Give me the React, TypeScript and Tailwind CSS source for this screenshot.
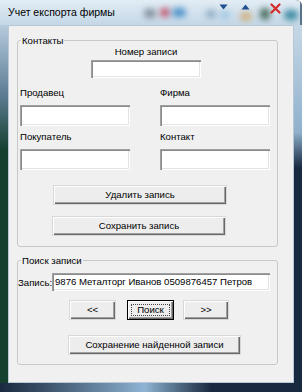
import React from 'react';

const FONT = { fontFamily: '"Liberation Sans", Arial, sans-serif' };

const SUNKEN =
  'bg-white shadow-[inset_1px_1px_0_#a0a0a0,inset_2px_2px_0_#8a8a8a,inset_-1px_-1px_0_#ffffff,inset_-2px_-2px_0_#e3e3e3]';
const RAISED =
  'bg-[#ededed] border border-[#d8d8d8] shadow-[inset_1px_1px_0_#ffffff,inset_-1px_-1px_0_#696969,inset_-2px_-2px_0_#a0a0a0]';

function TextBox({ className = '', value }: { className?: string; value?: string }) {
  return (
    <div className={`${SUNKEN} ${className} flex items-center pl-[3px] text-[9.6px] text-black whitespace-nowrap overflow-hidden`}>
      {value}
    </div>
  );
}

function Button({ className = '', children, focused }: { className?: string; children: React.ReactNode; focused?: boolean }) {
  if (focused) {
    return (
      <div className={`${className} h-[20px] flex bg-[#ededed] border border-black shadow-[inset_1px_1px_0_#ffffff,inset_-1px_-1px_0_#696969,inset_-2px_-2px_0_#a0a0a0]`}>
        <div className="flex-1 m-[3px] border border-dotted border-[#444] flex items-center justify-center text-[9.6px] text-black">
          {children}
        </div>
      </div>
    );
  }
  return (
    <div className={`${RAISED} ${className} h-[20px] flex items-center justify-center text-[9.6px] text-black`}>
      {children}
    </div>
  );
}

function TitleBar() {
  return (
    <div className="relative h-[25px] flex items-center pl-[8px] overflow-hidden bg-gradient-to-b from-[#e2ecf4] via-[#d3e2ee] to-[#c4d7e6]">
      {/* blurred desktop showing through the glass */}
      <div className="absolute left-[144px] top-[9px] w-[12px] h-[9px] rounded-full bg-[#7e8c98] blur-[3px]" />
      <div className="absolute left-[160px] top-[8px] w-[10px] h-[9px] rounded-full bg-[#c0506a] blur-[3px]" />
      <div className="absolute left-[172px] top-[8px] w-[14px] h-[9px] rounded-full bg-[#4a90c8] blur-[3px]" />
      <div className="absolute left-[206px] top-[10px] w-[10px] h-[8px] rounded-full bg-[#88a8c0] blur-[3px]" />
      <div className="absolute left-[220px] top-[11px] w-[10px] h-[8px] rounded-full bg-[#9ec6e4] blur-[3px]" />
      <div className="absolute left-[240px] top-[12px] w-[12px] h-[9px] rounded-full bg-[#d0b080] blur-[3px]" />
      <div className="absolute left-[260px] top-[8px] w-[10px] h-[12px] rounded-full bg-[#466a5a] blur-[3px]" />
      <div className="absolute left-[284px] top-[10px] w-[14px] h-[10px] rounded-full bg-[#3a8aa0] blur-[3px]" />
      <div className="absolute right-0 top-0 w-[2px] h-full bg-[#5a7288]" />

      <span className="relative text-[10.5px] text-black" style={FONT}>
        Учет експорта фирмы
      </span>

      <svg className="absolute left-[219px] top-[4px]" width="9" height="6" viewBox="0 0 9 6">
        <path d="M0.5 0.5 L8.5 0.5 L4.5 5.5 Z" fill="#1f4f8f" />
      </svg>
      <svg className="absolute left-[241px] top-[4px]" width="9" height="6" viewBox="0 0 9 6">
        <path d="M0.5 5.5 L8.5 5.5 L4.5 0.5 Z" fill="#1f4f8f" />
      </svg>
      <svg className="absolute left-[270px] top-[3px]" width="11" height="11" viewBox="0 0 11 11">
        <path d="M1.5 1.5 L9.5 9.5 M9.5 1.5 L1.5 9.5" stroke="#d42a2a" strokeWidth="2.2" strokeLinecap="round" />
      </svg>
    </div>
  );
}

export default function App() {
  return (
    <div
      className="w-[302px] h-[392px] flex flex-col bg-[#1c2d42] rounded-tr-[6px] overflow-hidden"
      style={FONT}
    >
      <TitleBar />
      <div className="flex h-[358px]">
        <div className="w-[8px] bg-gradient-to-b from-[#b7ccdd] from-0% via-[#5a7a92] via-20% to-[#15402f] to-35%" />
        <div className="w-[286px] bg-[#f0f0f0] border border-[#b8c8d6] flex flex-col">
          <fieldset className="ml-[8px] mt-[9px] w-[261px] border border-[#c8c8c8] rounded-[3px] pb-[10px]">
            <legend className="ml-[3px] px-[1px] text-[9.6px] leading-[11px] text-black">Контакты</legend>
            <div className="ml-[73px] w-[110px] text-center text-[9.6px] leading-[11px] text-black">Номер записи</div>
            <TextBox className="ml-[73px] mt-[3px] w-[110px] h-[18px]" />
            <div className="grid grid-cols-[110px_110px] gap-x-[30px] ml-[2px]">
              <div className="mt-[9px] text-[9.6px] leading-[11px] text-black">Продавец</div>
              <div className="mt-[9px] text-[9.6px] leading-[11px] text-black">Фирма</div>
              <TextBox className="mt-[7px] h-[21px]" />
              <TextBox className="mt-[7px] h-[21px]" />
              <div className="mt-[5px] text-[9.6px] leading-[11px] text-black">Покупатель</div>
              <div className="mt-[5px] text-[9.6px] leading-[11px] text-black">Контакт</div>
              <TextBox className="mt-[7px] h-[21px]" />
              <TextBox className="mt-[7px] h-[21px]" />
            </div>
            <Button className="ml-[35px] mt-[15px] w-[174px]">Удалить запись</Button>
            <Button className="ml-[34px] mt-[11px] w-[174px]">Сохранить запись</Button>
          </fieldset>

          <fieldset className="ml-[8px] mt-[8px] w-[261px] border border-[#c8c8c8] rounded-[3px] pb-[9px]">
            <legend className="ml-[3px] px-[1px] text-[9.6px] leading-[11px] text-black">Поиск записи</legend>
            <div className="flex items-center mt-[7px]">
              <div className="w-[34px] text-[9.6px] leading-[11px] text-black">Запись:</div>
              <TextBox className="w-[218px] h-[18px]" value="9876 Металторг Иванов 0509876457 Петров" />
            </div>
            <div className="flex mt-[9px] ml-[51px]">
              <Button className="w-[47px]">&lt;&lt;</Button>
              <Button className="w-[47px] ml-[11px]" focused>
                Поиск
              </Button>
              <Button className="w-[46px] ml-[9px]">&gt;&gt;</Button>
            </div>
            <Button className="ml-[50px] mt-[15px] w-[173px]">Сохранение найденной записи</Button>
          </fieldset>
        </div>
        <div className="w-[8px] bg-gradient-to-b from-[#c6d8e6] from-0% via-[#8fb0cc] via-30% to-[#172a40] to-40%" />
      </div>
      <div className="h-[9px] bg-gradient-to-r from-[#1a2a3e] from-0% via-[#8fb4d4] via-48% to-[#1a2a3e] to-70%" />
    </div>
  );
}
